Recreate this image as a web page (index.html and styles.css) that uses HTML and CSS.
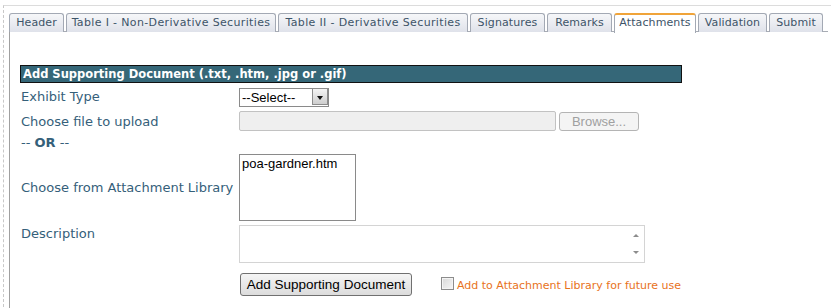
FILE: index.html
```html
<!DOCTYPE html>
<html lang="en">
<head>
    <meta charset="UTF-8">
    <title>Attachments</title>
    <link rel="stylesheet" href="styles.css">
</head>
<body>
    <div class="frame">
        <ul class="tabs">
            <li class="tab tab-header">Header</li>
            <li class="tab tab-table1">Table I - Non-Derivative Securities</li>
            <li class="tab tab-table2">Table II - Derivative Securities</li>
            <li class="tab tab-signatures">Signatures</li>
            <li class="tab tab-remarks">Remarks</li>
            <li class="tab tab-attachments active">Attachments</li>
            <li class="tab tab-validation">Validation</li>
            <li class="tab tab-submit">Submit</li>
        </ul>

        <div class="panel">
            <h3 class="section-title">Add Supporting Document (.txt, .htm, .jpg or .gif)</h3>

            <div class="row row-exhibit">
                <label class="label">Exhibit Type</label>
                <span class="select-wrap">
                    <select class="select">
                        <option>--Select--</option>
                    </select>
                    <span class="select-arrow"></span>
                </span>
            </div>

            <div class="row row-file">
                <label class="label">Choose file to upload</label>
                <input class="file-path" type="text" disabled>
                <button class="browse" disabled>Browse...</button>
            </div>

            <div class="row row-or">
                <span class="or">-- <b>OR</b> --</span>
            </div>

            <div class="row row-library">
                <label class="label">Choose from Attachment Library</label>
                <div class="listbox">
                    <div class="list-item">poa-gardner.htm</div>
                </div>
            </div>

            <div class="row row-desc">
                <label class="label">Description</label>
                <span class="textarea-wrap">
                    <textarea class="textarea"></textarea>
                    <span class="scroll-arrows">
                        <span class="arrow-up"></span>
                        <span class="arrow-down"></span>
                    </span>
                </span>
            </div>

            <div class="row row-submit">
                <span class="label"></span>
                <button class="btn">Add Supporting Document</button>
                <label class="keep">
                    <span class="checkbox"></span>
                    Add to Attachment Library for future use
                </label>
            </div>
        </div>
    </div>
</body>
</html>
```

FILE: styles.css
```css
* {
    box-sizing: border-box;
    margin: 0;
    padding: 0;
}

body {
    font-family: 'DejaVu Sans', Verdana, sans-serif;
    background: #fff;
    color: #35607a;
    padding-top: 5px;
    height: 308px;
    overflow: hidden;
}

.frame {
    margin-left: 3px;
    border-top: 1px solid #dcdcdc;
    border-left: 1px dashed #c8c8c8;
    padding: 7px 0 0 5px;
    height: 302px;
}

/* Tab strip */
.tabs {
    list-style: none;
    display: flex;
    gap: 2px;
    height: 19px;
    border-bottom: 1px solid #a8acb4;
    margin-right: 3px;
}

.tab {
    height: 19px;
    font-size: 11px;
    line-height: 17px;
    text-align: center;
    color: #3d5468;
    white-space: nowrap;
    letter-spacing: 0.1px;
    border: 1px solid #a3a9b4;
    border-bottom: none;
    border-radius: 3px 3px 0 0;
    background: linear-gradient(#f6f7f9, #dfe2ea);
}

.tab-header { width: 55px; }
.tab-table1 { width: 210px; letter-spacing: 0.35px; }
.tab-table2 { width: 190px; letter-spacing: 0.35px; }
.tab-signatures { width: 75px; }
.tab-remarks { width: 65px; }
.tab-attachments { width: 82px; }
.tab-validation { width: 69px; }
.tab-submit { width: 54px; }

.tab.active {
    height: 20px;
    background: #fff;
    border-top: 2px solid #f0a43a;
    line-height: 16px;
}

/* Panel */
.panel {
    border-left: 1px solid #a0a0a0;
    height: 280px;
    padding: 33px 0 0 10px;
}

.section-title {
    width: 662px;
    height: 18px;
    background: #356778;
    border: 1px solid #111;
    color: #fff;
    font-size: 11.5px;
    line-height: 16px;
    padding-left: 2px;
    font-weight: bold;
}

.row {
    display: flex;
    align-items: center;
}

.label {
    width: 219px;
    flex: none;
    font-size: 13px;
    padding-left: 1px;
    color: #35607a;
}

/* Select */
.row-exhibit {
    margin-top: 4px;
    height: 19px;
}

.select-wrap {
    position: relative;
    display: inline-block;
}

.select {
    appearance: none;
    width: 90px;
    height: 19px;
    border: 1px solid #8a8a8a;
    background: #fff;
    font-family: 'Liberation Sans', Arial, sans-serif;
    font-size: 13px;
    color: #000;
    padding-left: 2px;
}

.select-arrow {
    position: absolute;
    top: 1px;
    right: 1px;
    width: 16px;
    height: 17px;
    border: 1px solid #8d8d8d;
    background: linear-gradient(#f4f4f4, #cfcfcf);
}

.select-arrow::after {
    content: '';
    position: absolute;
    left: 4px;
    top: 7px;
    border-left: 3.5px solid transparent;
    border-right: 3.5px solid transparent;
    border-top: 4px solid #111;
}

/* File */
.row-file {
    margin-top: 5px;
    height: 20px;
}

.file-path {
    width: 317px;
    height: 20px;
    border: 1px solid #c2c2c2;
    border-radius: 2px;
    background: #efefef;
}

.browse {
    margin-left: 3px;
    width: 80px;
    height: 19px;
    border: 1px solid #b4b4b4;
    border-radius: 3px;
    background: #f4f4f4;
    color: #a0a0a0;
    font-family: 'Liberation Sans', Arial, sans-serif;
    font-size: 13px;
}

.row-or {
    height: 22px;
    font-size: 13px;
    padding-left: 1px;
}

/* Library */
.row-library {
    margin-top: 1px;
}

.listbox {
    width: 117px;
    height: 67px;
    border: 1px solid #8a8a8a;
    font-family: 'Liberation Sans', Arial, sans-serif;
    font-size: 13px;
    color: #000;
    padding: 1px 2px;
}

/* Description */
.row-desc {
    margin-top: 4px;
    align-items: flex-start;
}

.row-desc .label {
    padding-top: 1px;
}

.textarea-wrap {
    position: relative;
    display: inline-block;
    height: 38px;
}

.textarea {
    display: block;
    width: 406px;
    height: 38px;
    border: 1px solid #d4d4d4;
    resize: none;
}

.scroll-arrows {
    position: absolute;
    top: 1px;
    right: 1px;
    width: 16px;
    height: 36px;
}

.arrow-up,
.arrow-down {
    position: absolute;
    left: 5px;
    border-left: 3px solid transparent;
    border-right: 3px solid transparent;
}

.arrow-up {
    top: 8px;
    border-bottom: 3px solid #8c8c8c;
}

.arrow-down {
    top: 25px;
    border-top: 3px solid #8c8c8c;
}

/* Submit */
.row-submit {
    margin-top: 10px;
}

.btn {
    margin-left: 1px;
    width: 172px;
    height: 23px;
    border: 1px solid #707070;
    border-radius: 3px;
    background: linear-gradient(#f5f5f5, #dcdcdc);
    font-family: 'Liberation Sans', Arial, sans-serif;
    font-size: 13.5px;
    color: #000;
}

.keep {
    display: flex;
    align-items: center;
    margin-left: 29px;
    margin-top: 2px;
    font-size: 11px;
    color: #e8721c;
}

.checkbox {
    width: 13px;
    height: 13px;
    margin-right: 3px;
    margin-top: -4px;
    border: 1px solid #8c8c8c;
    background: linear-gradient(135deg, #d8d8d8, #f6f6f6);
    box-shadow: inset 0 0 0 1px #f4f4f4;
}
```
